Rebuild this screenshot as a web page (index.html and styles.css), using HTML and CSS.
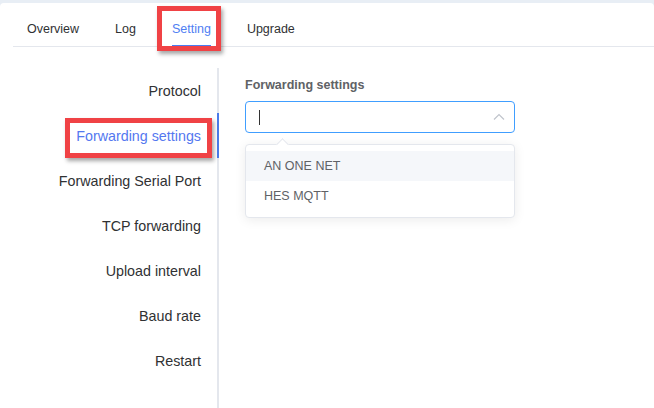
FILE: index.html
```html
<!DOCTYPE html>
<html lang="en">
<head>
<meta charset="utf-8">
<title>Setting</title>
<link rel="stylesheet" href="styles.css">
</head>
<body>
<div class="card">
  <div class="tabs">
    <div class="tab first"><span class="tab-label">Overview</span></div>
    <div class="tab"><span class="tab-label">Log</span></div>
    <div class="tab active"><span class="tab-label">Setting</span><span class="mark mark-tab"></span></div>
    <div class="tab"><span class="tab-label">Upgrade</span></div>
  </div>
  <div class="main">
    <div class="menu">
      <div class="menu-item">Protocol</div>
      <div class="menu-item active">Forwarding settings<span class="mark mark-menu"></span></div>
      <div class="menu-item">Forwarding Serial Port</div>
      <div class="menu-item">TCP forwarding</div>
      <div class="menu-item">Upload interval</div>
      <div class="menu-item">Baud rate</div>
      <div class="menu-item">Restart</div>
    </div>
    <div class="content">
      <div class="field-label">Forwarding settings</div>
      <div class="select">
        <div class="select-input">
          <span class="caret-cursor"></span>
          <svg class="chevron" width="12" height="8" viewBox="0 0 12 8"><polyline points="1,6.5 6,1.5 11,6.5" fill="none" stroke="#c0c4cc" stroke-width="1.2"/></svg>
        </div>
        <div class="dropdown">
          <span class="dropdown-arrow"></span>
          <div class="option hover">AN ONE NET</div>
          <div class="option">HES MQTT</div>
        </div>
      </div>
    </div>
  </div>
</div>
</body>
</html>
```
FILE: styles.css
```css
html, body {
  margin: 0;
  padding: 0;
}
body {
  background: #e8eef5;
  font-family: "Liberation Sans", Arial, sans-serif;
  width: 654px;
  height: 408px;
  overflow: hidden;
}
.card {
  margin-top: 3px;
  height: 405px;
  background: #ffffff;
  border-radius: 4px 4px 0 0;
  display: flex;
  flex-direction: column;
}
.tabs {
  display: flex;
  margin-left: 13px;
  height: 43px;
  border-bottom: 1px solid #e4e7ed;
}
.tab {
  position: relative;
  padding: 0 18px;
  display: flex;
}
.tab.first {
  padding-left: 14px;
}
.tab-label {
  box-sizing: border-box;
  height: 44px;
  margin-bottom: -1px;
  padding-top: 19px;
  font-size: 12.5px;
  line-height: 14px;
  color: #303133;
  border-bottom: 2px solid transparent;
}
.tab.active .tab-label {
  color: #4f80f3;
  border-bottom-color: #4a7cf0;
}
.mark {
  position: absolute;
  box-sizing: border-box;
  border: 5px solid #f04245;
  box-shadow: 2px 3px 4px rgba(0, 0, 0, 0.35);
  pointer-events: none;
}
.mark-tab {
  left: 3px;
  top: 3px;
  width: 64px;
  height: 45px;
}
.main {
  flex: 1;
  display: flex;
  margin-top: 21px;
}
.menu {
  width: 217px;
  border-right: 2px solid #e4e7ed;
}
.menu-item {
  position: relative;
  height: 45px;
  line-height: 47px;
  text-align: right;
  padding-right: 16px;
  margin-right: -2px;
  border-right: 2px solid transparent;
  font-size: 14.3px;
  color: #303133;
  white-space: nowrap;
}
.menu-item.active {
  color: #5478f0;
  border-right-color: #4a7be9;
}
.mark-menu {
  right: 5px;
  top: 5px;
  width: 147px;
  height: 40px;
}
.content {
  padding-left: 26px;
  padding-top: 8px;
}
.field-label {
  font-size: 12.5px;
  font-weight: bold;
  line-height: 18px;
  color: #606266;
  margin-bottom: 7px;
}
.select {
  position: relative;
  width: 270px;
}
.select-input {
  box-sizing: border-box;
  height: 32px;
  border: 1px solid #409eff;
  border-radius: 4px;
  display: flex;
  align-items: center;
  justify-content: space-between;
  padding: 0 9px 0 13px;
}
.caret-cursor {
  width: 1px;
  height: 15px;
  background: #333;
}
.chevron {
  display: block;
}
.dropdown {
  position: absolute;
  left: 0;
  top: 43px;
  width: 270px;
  box-sizing: border-box;
  padding: 6px 0;
  background: #fff;
  border: 1px solid #e4e7ed;
  border-radius: 4px;
  box-shadow: 0 2px 12px rgba(0, 0, 0, 0.08);
}
.dropdown-arrow {
  position: absolute;
  left: 32px;
  top: -5px;
  width: 8px;
  height: 8px;
  background: #fff;
  border-left: 1px solid #e4e7ed;
  border-top: 1px solid #e4e7ed;
  transform: rotate(45deg);
}
.option {
  height: 30px;
  line-height: 30px;
  padding: 0 18px;
  font-size: 12.5px;
  color: #606266;
}
.option.hover {
  background: #f5f7fa;
}
```
